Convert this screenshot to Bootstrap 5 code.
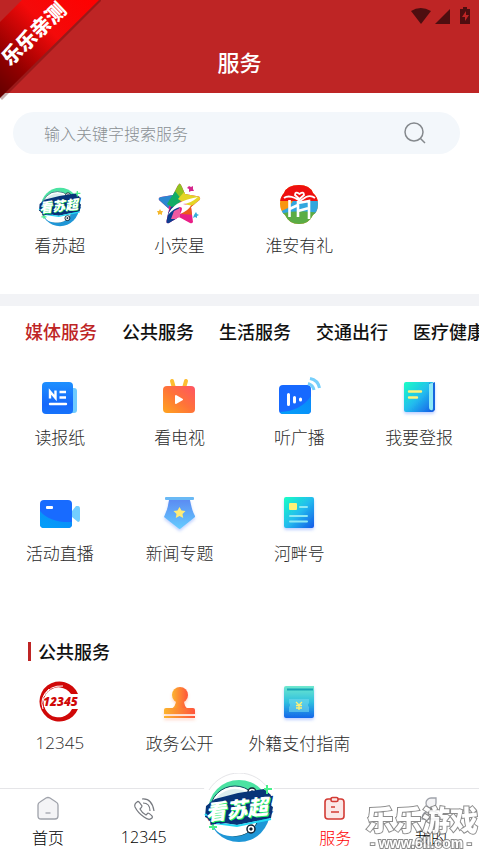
<!DOCTYPE html>
<html lang="zh-CN">
<head>
<meta charset="utf-8">
<meta name="viewport" content="width=device-width, initial-scale=1">
<title>服务</title>
<link href="https://cdn.jsdelivr.net/npm/bootstrap@5.3.0/dist/css/bootstrap.min.css" rel="stylesheet">
<style>
body{font-family:"Noto Sans CJK SC",sans-serif;color:#333;background:#fff;font-weight:300}
.top-bar{background:#be2525;height:93px;padding-bottom:18px}
.top-bar h1{font-size:22px;line-height:28px;font-weight:500}
.status-icons{top:6px;right:8px}
.ribbon{top:0;left:0;z-index:5}
.search-box{margin:19px 19px 27px 13px;height:42px;background:#f3f7fb;padding:0 32px 0 31px}
.search-box input{font-size:16px;line-height:24px;font-weight:300;color:#555;outline:0}
.search-box input::placeholder{color:#8a8f93;opacity:1}
.tile{gap:4px;color:#2b2b2b;font-size:17px;line-height:24px}
.tile svg{overflow:visible}
.tiles{row-gap:40px}
.digits{font-family:"Open Sans","Noto Sans",sans-serif}
.divider{height:12px;margin-top:37px;background:#f2f3f6}
.tabs{height:50px;gap:25px;padding-left:25px;margin-bottom:17px}
.tabs button{font-size:18px;line-height:26px;font-weight:500;color:#111}
.tabs button.active{color:#be2525}
.section-title{margin:72px 0 14px 28px;font-size:18px;line-height:28px;font-weight:500;color:#111;gap:7px}
.section-title::before{content:"";width:3px;height:19px;background:#be2525}
.bottom-nav{height:65px;border-top:1px solid #e5e5e8}
.bottom-nav a{color:#000;font-size:16px;line-height:24px;padding-top:4px}
.bottom-nav a.active{color:#f00}
.bottom-nav .hub{margin-top:-16px;padding-top:0}
.watermark{right:0;bottom:0;pointer-events:none}
.logo-text{font-family:"Noto Sans CJK SC",sans-serif;font-weight:900}
.num-text{font-family:"Open Sans",sans-serif;font-weight:800;font-style:italic}
.site-text{font-family:"Liberation Sans",sans-serif;font-weight:700}
</style>
<script src="https://cdn.jsdelivr.net/npm/bootstrap@5.3.0/dist/js/bootstrap.bundle.min.js"></script>
</head>
<body>
<svg width="0" height="0" class="position-absolute" aria-hidden="true">
<defs>
<linearGradient id="blue" x1="0" y1="0" x2="0" y2="1"><stop offset="0" stop-color="#1e90ff"/><stop offset=".7" stop-color="#1668fb"/><stop offset="1" stop-color="#1673fb"/></linearGradient>
<linearGradient id="cyan" x1="0" y1="1" x2="1" y2="0"><stop offset="0" stop-color="#04a0f8"/><stop offset="1" stop-color="#0b87fa"/></linearGradient>
<linearGradient id="orange" x1="0" y1="1" x2="1" y2="0"><stop offset="0" stop-color="#ffa51f"/><stop offset=".5" stop-color="#ff7338"/><stop offset="1" stop-color="#ff5464"/></linearGradient>
<linearGradient id="amber" x1="0" y1="0" x2="1" y2="0"><stop offset="0" stop-color="#fbb42e"/><stop offset="1" stop-color="#ff543b"/></linearGradient>
<linearGradient id="mint" x1="0" y1="0" x2="1" y2="1"><stop offset="0" stop-color="#19ffc4"/><stop offset=".5" stop-color="#22bdee"/><stop offset="1" stop-color="#1458e8"/></linearGradient>
<linearGradient id="pay" x1="0" y1="0" x2="0" y2="1"><stop offset="0" stop-color="#6fe8ce"/><stop offset=".5" stop-color="#2fc0df"/><stop offset="1" stop-color="#1466ea"/></linearGradient>
<linearGradient id="pen" x1="0" y1="0" x2="0" y2="1"><stop offset="0" stop-color="#5b8cf2"/><stop offset="1" stop-color="#66ccff"/></linearGradient>
<linearGradient id="rib" x1="0" y1="1" x2="1" y2="0"><stop offset="0" stop-color="#620000"/><stop offset=".25" stop-color="#930000"/><stop offset=".6" stop-color="#f40a0a"/><stop offset="1" stop-color="#f00"/></linearGradient>
<linearGradient id="ring" x1="0" y1="0" x2="0" y2="1"><stop offset=".3" stop-color="#4be3a2"/><stop offset=".62" stop-color="#1f96d6"/></linearGradient>
<filter id="soft" x="-30%" y="-30%" width="160%" height="170%"><feDropShadow dx="0" dy="2" stdDeviation="1.6" flood-color="#4a7cff" flood-opacity=".35"/></filter>
<filter id="warm" x="-30%" y="-30%" width="160%" height="170%"><feDropShadow dx="0" dy="2" stdDeviation="1.5" flood-color="#ff7340" flood-opacity=".3"/></filter>
<clipPath id="star"><path d="M23.500 2.500Q25 3 26 6L29 13L43 15.500Q45 17 43.500 19L35 26L37 41Q36 43 34 42L23 36L13 42Q10 43 10.500 40L13 28L3 19Q2 16.500 5 16L17 14L21.500 5Z"/></clipPath>
<clipPath id="quad"><path d="M9 12Q12 4 24 4Q35 4 38 12Q43 16 43 23Q43 31 38 34Q34 43 24 43Q14 43 10 34Q5 30 5 23Q5 16 9 12Z"/></clipPath>
<symbol id="susuper" viewBox="0 0 72 68">
<circle cx="36" cy="34" r="31" fill="url(#ring)"/>
<circle cx="32" cy="34" r="25" fill="#fff" stroke="#104e62"/>
<path d="M14 20Q30 5 49 18L40 22Q27 16 14 25Z" fill="#dceeee"/>
<path d="M8 38Q9 61 33 59Q45 58 52 48Q39 58 26 51Q14 46 12 37Z" fill="#fff"/>
<circle cx="49" cy="15" r="4" fill="#fff" stroke="#123" stroke-width="1.500"/><path d="M47 15l2-2 2 2-2 2z" fill="#123"/>
<circle cx="48" cy="52" r="4" fill="#fff" stroke="#123" stroke-width="1.500"/><path d="M46 52l2-2 2 2-2 2z" fill="#123"/>
<path d="M3 29L12 22L35 16L61 12L68 18L66 27L70 30L68 41L49 45L34 48L14 45L2 40Z" fill="#083578"/>
<path d="M2 37L12 46L34 49L68 42" fill="none" stroke="#22d9f5" stroke-width="2"/>
<path d="M61 12h8M64 8v9M6 50h8M10 46v7" stroke="#48f08b" stroke-width="2"/>
<g transform="rotate(-6 36 32)" class="logo-text" font-size="21" font-style="italic"><text x="3" y="41" fill="#1bef65" stroke="#0b2c76" stroke-width="3" paint-order="stroke">看苏超</text><text x="2" y="40" fill="#fff">看苏超</text></g>
</symbol>
</defs></svg>

<div class="d-flex flex-column min-vh-100 position-relative">
<header class="top-bar d-flex align-items-end justify-content-center position-relative text-white">
<svg class="ribbon position-absolute" width="104" height="102" viewBox="0 0 104 102" role="img" aria-label="乐乐亲测">
<path d="M101 1L2 100L0 98V94L94 0H101Z" fill="#400" opacity=".3"/><path d="M22 0H99L0 98V22Z" fill="url(#rib)"/>
<text class="logo-text" x="34" y="41" font-size="20" fill="#fff" text-anchor="middle" transform="rotate(-44 34 34)">乐乐亲测</text></svg>
<svg class="status-icons position-absolute" width="61" height="19" viewBox="0 0 61 19" fill="#4e0e10" aria-hidden="true"><path d="M1 5Q10.500-1 21 5L11 18Z"/><path d="M25 18L40 3V18Z"/><path fill-rule="evenodd" d="M53 1h4v2h3v15H50V3h3zM56 5l-4 6h3v4l4-6h-3z"/></svg>
<h1 class="m-0">服务</h1>
</header>

<main class="flex-grow-1">
<form class="search-box d-flex align-items-center rounded-pill" role="search" onsubmit="return false">
<input class="border-0 bg-transparent p-0 flex-grow-1 w-100" type="text" aria-label="搜索服务" placeholder="输入关键字搜索服务">
<button class="border-0 bg-transparent p-0 d-flex" type="submit" aria-label="搜索"><svg width="26" height="26" viewBox="0 0 26 26" fill="none" stroke="#85898d" stroke-width="1.500"><circle cx="12" cy="12" r="9"/><path d="M18.500 18.500L23 23"/></svg></button>
</form>

<div class="tiles row g-0 row-cols-4">
<a href="#" class="tile col d-flex flex-column align-items-center text-decoration-none text-nowrap"><svg width="48" height="48" viewBox="0 0 48 48"><use href="#susuper" x="1" y="5" width="46" height="42"/></svg><span>看苏超</span></a>
<a href="#" class="tile col d-flex flex-column align-items-center text-decoration-none text-nowrap"><svg width="48" height="48" viewBox="0 0 48 48"><g clip-path="url(#star)"><path d="M0 0h48v48H0z" fill="#e91e86"/><path d="M23 0L14 14L23 22L35 10Z" fill="#8fc31f"/><path d="M0 12H19L12 28L0 20Z" fill="#2b87d1"/><path d="M19 10L11 23L17 27L26 19Z" fill="#11ad65"/><path d="M28 11L48 12V20L34 26L22 18Z" fill="#e5d526"/><path d="M15 26L24 24L18 46H5Z" fill="#0c3d91"/><path d="M34 25L25 33L40 34V23Z" fill="#ec5a1b"/><path d="M18 30L24 27V38H15Z" fill="#ef5aa2"/></g><path d="M12 34Q17 20 42 16Q34 23 27 23L35 24.500Q32 30 24 33Q28 26 24 26Q18 27 12 34Z" fill="#fff"/><path d="M33 5l2 1 2-1v3l1 2h-3l-2 1v-3l-2-1z" fill="#d4278c"/><path d="M4 28l1 2h2l-1 2v2l-2-1-2 1v-2l-1-2h2z" fill="#f4b72c"/><path d="M40 31l1 2 2 1-2 1v2l-2-1-2 1 1-3z" fill="#35add8"/></svg><span>小荧星</span></a>
<a href="#" class="tile col d-flex flex-column align-items-center text-decoration-none text-nowrap"><svg width="48" height="48" viewBox="0 0 48 48"><g clip-path="url(#quad)"><path d="M0 0h48v48H0z" fill="#f8960f"/><path d="M0 0h48v20H0z" fill="#ee1010"/><path d="M18 20H48V33H0L13 27Z" fill="#32a6de"/><path d="M0 34Q25 27 48 33V48H0Z" fill="#5aac45"/></g><path d="M9 17Q13 14 20 17L25 20L31 16Q36 14 40 17M24.500 18L20 14Q20 10 24.500 13Q29 10 29 14Z" fill="none" stroke="#fff" stroke-width="1.800"/><path d="M14.500 19V36M14.500 28L23 24M23 20V36M23 22L34 20V38M23 30L34 27" fill="none" stroke="#fff" stroke-width="2.600"/></svg><span>淮安有礼</span></a>
</div>

<div class="divider"></div>
<div class="tabs d-flex align-items-center overflow-hidden text-nowrap" role="tablist">
<button type="button" role="tab" aria-selected="true" class="active border-0 bg-transparent p-0 flex-shrink-0">媒体服务</button>
<button type="button" role="tab" class="border-0 bg-transparent p-0 flex-shrink-0">公共服务</button>
<button type="button" role="tab" class="border-0 bg-transparent p-0 flex-shrink-0">生活服务</button>
<button type="button" role="tab" class="border-0 bg-transparent p-0 flex-shrink-0">交通出行</button>
<button type="button" role="tab" class="border-0 bg-transparent p-0 flex-shrink-0">医疗健康</button>
</div>

<div class="tiles row g-0 row-cols-4">
<a href="#" class="tile col d-flex flex-column align-items-center text-decoration-none text-nowrap"><svg width="48" height="48" viewBox="0 0 48 48"><rect x="20" y="15" width="21" height="25" rx="3" fill="#6fcbff"/><rect x="6" y="9" width="31" height="32" rx="4" fill="url(#blue)"/><path d="M14 25.500V18.500L19.500 25V17.500M23.500 19H30M23.500 24.500H30" fill="none" stroke="#fff" stroke-width="2.400"/><path d="M14 31H30" stroke="#fff" stroke-width="2.400" stroke-linecap="round"/></svg><span>读报纸</span></a>
<a href="#" class="tile col d-flex flex-column align-items-center text-decoration-none text-nowrap"><svg width="48" height="48" viewBox="0 0 48 48"><path d="M16 8L18 15M30 8L28 15" stroke="#fdbd32" stroke-width="4" stroke-linecap="round"/><rect x="7" y="13" width="32" height="27" rx="4" fill="url(#orange)"/><path d="M20 23L26 26.500L20 30Z" fill="#fff" stroke="#fff" stroke-width="2" stroke-linejoin="round"/></svg><span>看电视</span></a>
<a href="#" class="tile col d-flex flex-column align-items-center text-decoration-none text-nowrap"><svg width="48" height="48" viewBox="0 0 48 48"><rect x="4" y="12" width="32" height="29" rx="4" fill="#1769ff"/><path d="M5 39Q26 38 36 23V37Q36 41 32 41H8Q6 41 5 39Z" fill="url(#cyan)"/><path d="M13.500 21.500V31.500M19.500 24.500V29M25.500 26V27" stroke="#fff" stroke-width="3" stroke-linecap="round"/><path d="M33 10.500Q38 12 39 17M35 5.500Q43 7 44.500 15" fill="none" stroke="#76cffb" stroke-width="3"/></svg><span>听广播</span></a>
<a href="#" class="tile col d-flex flex-column align-items-center text-decoration-none text-nowrap"><svg width="48" height="48" viewBox="0 0 48 48"><g filter="url(#soft)"><rect x="9" y="9" width="30" height="30" rx="2" fill="url(#mint)"/><path d="M34 11Q34 9 36 10Q37 11 40 9V37Q37 40 34 37Z" fill="#1665dd"/><path d="M34 11Q35 10 38 10V35Q38 38 36 37Q34 37 34 34Z" fill="#8deaf7"/></g><path d="M14 18.500H26M14 24.500H22" stroke="#fff27b" stroke-width="2.400" stroke-linecap="round"/></svg><span>我要登报</span></a>
<a href="#" class="tile col d-flex flex-column align-items-center text-decoration-none text-nowrap"><svg width="48" height="48" viewBox="0 0 48 48"><path d="M36 22L40 17H42Q44 17 44 20V30Q44 33 42 33L36 28Z" fill="#72ceff"/><rect x="4" y="11" width="32" height="28" rx="4" fill="#186bff"/><path d="M4 22Q14 34 36 33V35Q36 39 32 39H8Q4 39 4 35Z" fill="url(#cyan)"/><rect x="10" y="17" width="7" height="3" rx="1" fill="#fff"/></svg><span>活动直播</span></a>
<a href="#" class="tile col d-flex flex-column align-items-center text-decoration-none text-nowrap"><svg width="48" height="48" viewBox="0 0 48 48"><g filter="url(#soft)"><path d="M13 11H34Q36 22 39 27V28L24 40Q23 40 22 39L8 28Q12 20 13 11Z" fill="url(#pen)"/></g><rect x="9" y="8" width="29" height="3" rx="1" fill="#69b9f5"/><path d="M23.500 18l2 3.500 4 .5-3 3 .7 4-3.700-2-3.700 2 .7-4-3-3 4-.5z" fill="#ffec78"/></svg><span>新闻专题</span></a>
<a href="#" class="tile col d-flex flex-column align-items-center text-decoration-none text-nowrap"><svg width="48" height="48" viewBox="0 0 48 48"><rect x="9" y="8" width="30" height="31" rx="2" fill="url(#mint)" filter="url(#soft)"/><rect x="14" y="14" width="8" height="7" rx="1" fill="#fff176"/><path d="M25 18H32M15 27H32M15 32.500H32" stroke="#8de9f4" stroke-width="2" stroke-linecap="round"/></svg><span>河畔号</span></a>
</div>

<h2 class="section-title d-flex align-items-center">公共服务</h2>
<div class="tiles row g-0 row-cols-4">
<a href="#" class="tile col d-flex flex-column align-items-center text-decoration-none text-nowrap"><svg width="48" height="48" viewBox="0 0 48 48"><path d="M42 15A20 20 0 1 0 42 30H36A15 15 0 1 1 35 15Z" fill="#d00808"/><path d="M8 17Q14 6 27 7M7 30Q3 19 13 10" fill="none" stroke="#fff" stroke-width="1"/><text class="num-text" x="7" y="27" font-size="12" fill="#d00808" stroke="#fff" stroke-width="2" paint-order="stroke">12345</text></svg><span class="digits">12345</span></a>
<a href="#" class="tile col d-flex flex-column align-items-center text-decoration-none text-nowrap"><svg width="48" height="48" viewBox="0 0 48 48"><g filter="url(#warm)" fill="url(#amber)"><path d="M20 22H28Q28 27 32 30H15Q20 27 20 22Z"/><circle cx="24" cy="16" r="8"/><path d="M10 29H37Q39 29 39 31V35H8V31Q8 29 10 29Z"/><path d="M8 37H39V39H8Z"/></g></svg><span>政务公开</span></a>
<a href="#" class="tile col d-flex flex-column align-items-center text-decoration-none text-nowrap"><svg width="48" height="48" viewBox="0 0 48 48"><path d="M11 7H39V37Q39 39 37 39H11Q9 39 9 37V9Q9 7 11 7Z" fill="url(#pay)" filter="url(#soft)"/><path d="M12 10.500H38" stroke="#18a4b5" stroke-width="2"/><path d="M14 20H34V24Q32 26 34 28V33H14V28Q16 26 14 24Z" fill="#73d9ef" opacity=".6"/><path d="M21 23L24 26L27 23M24 26V31M21 26.500H27M21 29H27" fill="none" stroke="#fff176" stroke-width="1.300"/></svg><span>外籍支付指南</span></a>
</div>
</main>

<nav class="bottom-nav sticky-bottom bg-white d-flex" aria-label="主导航">
<a href="#" class="d-flex flex-column align-items-center text-decoration-none flex-fill w-100"><svg width="32" height="32" viewBox="0 0 32 32" fill="#f4f4f6" stroke="#9fa2aa" stroke-width="1.300"><path d="M6 12Q6 10 8 9L14 5Q16 4 18 5L24 9Q26 10 26 12V23Q26 26 23 26H9Q6 26 6 23Z"/><path d="M13.500 20H18.500"/></svg><span>首页</span></a>
<a href="#" class="d-flex flex-column align-items-center text-decoration-none flex-fill w-100"><svg width="32" height="32" viewBox="0 0 32 32" fill="none" stroke="#777a80" stroke-width="1.200"><path d="M9 9Q10 8 11 9L14 13Q14 14 12 16Q14 20 18 22L20 20Q21 20 24 23Q25 24 24 25Q21 28 16 24Q10 20 7 14Q6 11 9 9Z"/><path d="M14 6Q24 5 26 18M15 10Q22 10 22 18"/></svg><span class="digits">12345</span></a>
<a href="#" class="hub d-flex flex-column align-items-center text-decoration-none flex-fill w-100" aria-label="看苏超"><svg width="72" height="80" viewBox="0 0 72 80"><path d="M1 16A36 36 0 0 1 71 16V40H1Z" fill="#fff"/><circle cx="36" cy="36" r="35" fill="#fff"/><path d="M6 17A35 35 0 0 1 66 17" fill="none" stroke="#e5e5e8"/><use href="#susuper" x="0" y="4" width="72" height="68"/></svg></a>
<a href="#" class="active d-flex flex-column align-items-center text-decoration-none flex-fill w-100" aria-current="page"><svg width="32" height="32" viewBox="0 0 32 32" fill="#fbe8e7" stroke="#d33b35" stroke-width="1.600"><rect x="6" y="6" width="19" height="20" rx="3"/><rect x="12" y="4.500" width="7" height="4" rx="1.500"/><path d="M12 14H16M12 19H20"/></svg><span>服务</span></a>
<a href="#" class="d-flex flex-column align-items-center text-decoration-none flex-fill w-100"><svg width="32" height="32" viewBox="0 0 32 32" fill="#f4f4f6" stroke="#9fa2aa" stroke-width="1.300"><path d="M16 5H21V10A5 5 0 1 1 16 5Z"/><path d="M7 26Q7 18 16 18Q25 18 25 26Z"/></svg><span>我的</span></a>
<svg class="watermark position-absolute" width="114" height="50" viewBox="0 0 114 50" role="img" aria-label="乐乐游戏 www.6ll.com"><g fill="#fff" stroke="#777" stroke-width="2" paint-order="stroke" opacity=".85"><text class="logo-text" x="1" y="28" font-size="28">乐乐游戏</text><text class="site-text" x="56" y="45" font-size="14" text-anchor="middle">- www.6ll.com -</text></g></svg>
</nav>
</div>
</body>
</html>
